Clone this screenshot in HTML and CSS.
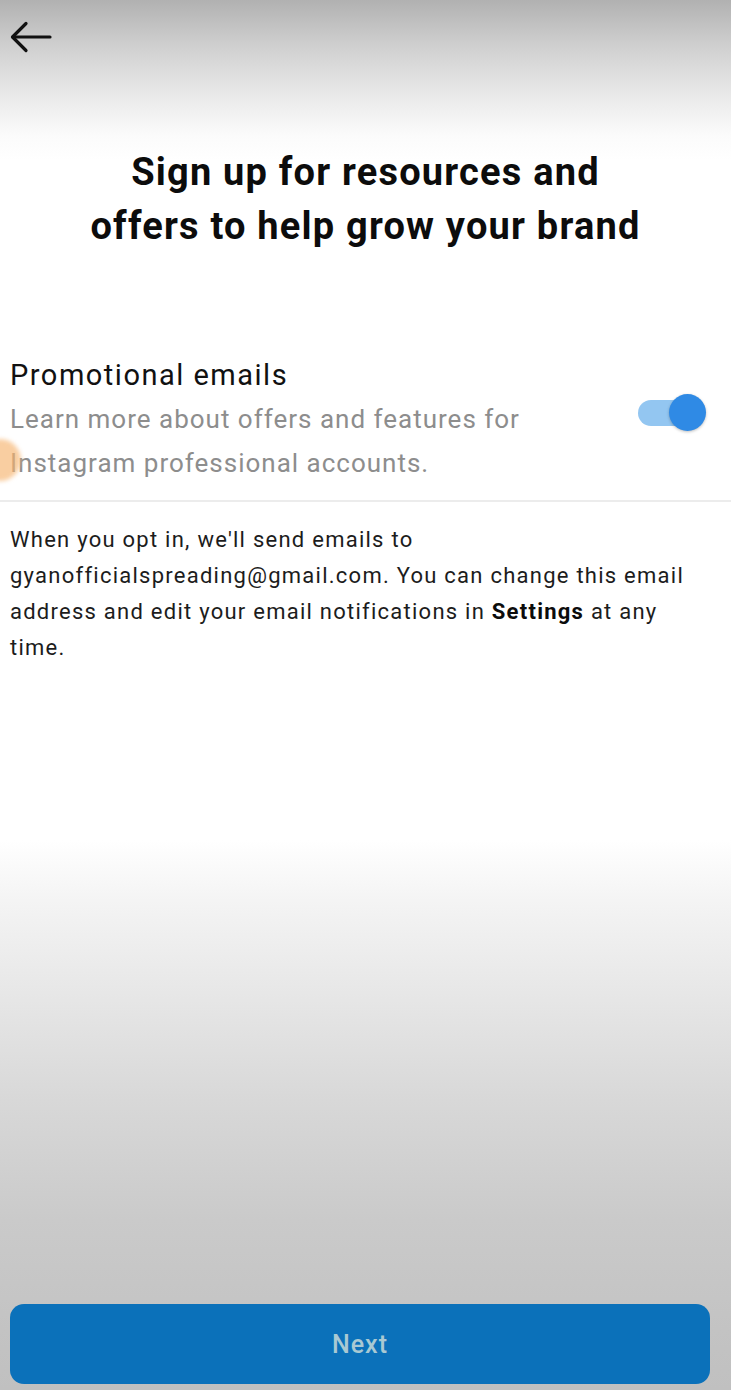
FILE: index.html
```html
<!DOCTYPE html>
<html lang="en">
<head>
<meta charset="utf-8">
<title>Promotional emails</title>
<link rel="stylesheet" href="styles.css">
</head>
<body>
<div class="screen">
  <header class="topbar">
    <button class="back" aria-label="Back">
      <svg width="42" height="32" viewBox="0 0 42 32" fill="none" stroke="#111" stroke-width="3.2" stroke-linecap="round" stroke-linejoin="round">
        <path d="M40 16H3"/>
        <path d="M16 2.5L2.5 16L16 29.5"/>
      </svg>
    </button>
  </header>

  <h1 class="title">Sign up for resources and<br>offers to help grow your brand</h1>

  <section class="option">
    <div class="option-text">
      <div class="option-label">Promotional emails</div>
      <div class="option-desc">Learn more about offers and features for Instagram professional accounts.</div>
    </div>
    <div class="toggle" role="switch" aria-checked="true">
      <span class="toggle-track"></span>
      <span class="toggle-thumb"></span>
    </div>
    <span class="touch-dot"></span>
  </section>

  <p class="note">When you opt in, we'll send emails to gyanofficialspreading@gmail.com. You can change this email address and edit your email notifications in <strong class="strong">Settings</strong> at any time.</p>

  <div class="footer">
    <button class="next">Next</button>
  </div>
</div>
</body>
</html>
```

FILE: styles.css
```css
* { box-sizing: border-box; }

html, body {
  margin: 0;
  padding: 0;
}

body {
  font-family: Roboto, "Noto Sans", "Liberation Sans", sans-serif;
  color: #111;
  background: linear-gradient(to bottom,
    #b1b1b1 0px,
    #cfcfcf 45px,
    #e9e9e9 95px,
    #fbfbfb 135px,
    #ffffff 160px,
    #ffffff 840px,
    #f4f4f4 900px,
    #e6e6e6 1000px,
    #d8d8d8 1100px,
    #cacaca 1220px,
    #c3c3c3 1330px,
    #c0c0c0 1390px);
  background-repeat: no-repeat;
  min-height: 1390px;
}

.screen {
  min-height: 1390px;
  display: flex;
  flex-direction: column;
}

.topbar {
  height: 75px;
  display: flex;
  align-items: flex-start;
  padding: 21px 0 0 10px;
}

.back {
  background: none;
  border: 0;
  padding: 0;
  margin: 0;
  display: block;
  line-height: 0;
}

.title {
  margin: 70px 0 0;
  text-align: center;
  font-size: 38px;
  line-height: 54px;
  font-weight: 700;
  letter-spacing: 1.2px;
  color: #0c0c0c;
}

.option {
  position: relative;
  margin-top: 103px;
  display: flex;
  align-items: flex-start;
  justify-content: space-between;
  padding: 0 25px 15px 10px;
  border-bottom: 2px solid #ececec;
}

.option-label {
  font-size: 29px;
  line-height: 38px;
  letter-spacing: 1.5px;
  color: #111;
}

.option-desc {
  margin-top: 3px;
  font-size: 26px;
  line-height: 44px;
  letter-spacing: 1px;
  color: #8d8d8d;
  max-width: 560px;
}

.toggle {
  position: relative;
  width: 68px;
  height: 38px;
  margin-top: 38px;
  flex: none;
}

.toggle-track {
  position: absolute;
  left: 0;
  top: 6px;
  width: 54px;
  height: 26px;
  border-radius: 13px;
  background: #93c6f1;
}

.toggle-thumb {
  position: absolute;
  right: 0;
  top: 0;
  width: 37px;
  height: 37px;
  border-radius: 50%;
  background: #2f8ae5;
  box-shadow: 0 1px 3px rgba(0,0,0,0.25);
}

.touch-dot {
  position: absolute;
  left: -21px;
  top: 83px;
  width: 42px;
  height: 42px;
  border-radius: 50%;
  background: rgba(246, 180, 110, 0.65);
  filter: blur(2px);
}

.note {
  margin: 20px 0 0;
  padding: 0 30px 0 10px;
  font-size: 22px;
  line-height: 36px;
  letter-spacing: 1.25px;
  color: #1c1c1c;
}

.strong {
  font-weight: 700;
  color: #0c0c0c;
}

.footer {
  margin-top: auto;
  padding: 0 21px 6px 10px;
}

.next {
  display: block;
  width: 100%;
  height: 80px;
  border: 0;
  border-radius: 14px;
  background: #0b71ba;
  color: #a9c9d3;
  font-family: Roboto, "Noto Sans", "Liberation Sans", sans-serif;
  font-size: 25px;
  font-weight: 500;
  letter-spacing: 1px;
}
```
